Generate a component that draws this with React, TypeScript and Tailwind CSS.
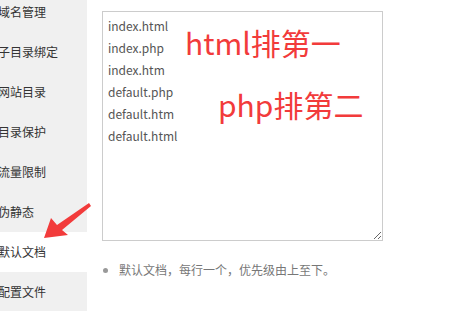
const menu = ["域名管理", "子目录绑定", "网站目录", "目录保护", "流量限制", "伪静态", "默认文档", "配置文件"];

const files = ["index.html", "index.php", "index.htm", "default.php", "default.htm", "default.html"].join("\n");

const font = { fontFamily: '"Microsoft YaHei", "Noto Sans CJK SC", sans-serif' };

export default function App() {
  return (
    <div className="relative flex h-[311px] w-[472px] overflow-hidden bg-white" style={font}>
      {/* sidebar */}
      <div className="w-[87px] shrink-0 bg-[#f0f0f0]">
        <div className="-mt-[8px] flex flex-col">
          {menu.map((m) => (
            <div
              key={m}
              className={
                "flex h-[40px] items-center pl-[0px] text-[12px] text-[#333] " +
                (m === "默认文档" ? "bg-white" : "")
              }
            >
              <span className="-ml-[2px] whitespace-nowrap">{m}</span>
            </div>
          ))}
        </div>
      </div>

      {/* content */}
      <div className="flex flex-col pl-[15px] pt-[11px]">
        <textarea
          readOnly
          value={files}
          className="h-[230px] w-[281px] resize border border-[#ccc] px-[5px] pt-[3px] text-[12px] leading-[22px] text-[#555] outline-none"
          style={font}
        />
        <ul className="mt-[20px] list-disc pl-[17px] text-[12px] text-[#777] marker:text-[#999]">
          <li>默认文档，每行一个，优先级由上至下。</li>
        </ul>
      </div>

      {/* annotations */}
      <div className="absolute left-[185px] top-[22px] text-[30px] leading-[40px] text-[#f23b3b]">html排第一</div>
      <div className="absolute left-[218px] top-[84px] text-[30px] leading-[40px] text-[#f23b3b]">php排第二</div>
      <svg className="absolute left-0 top-0" width="472" height="311" viewBox="0 0 472 311">
        <polygon points="44,238 51,218 57,225 89,203 91,206 62,230 68,235" fill="#f23b3b" />
      </svg>
    </div>
  );
}
